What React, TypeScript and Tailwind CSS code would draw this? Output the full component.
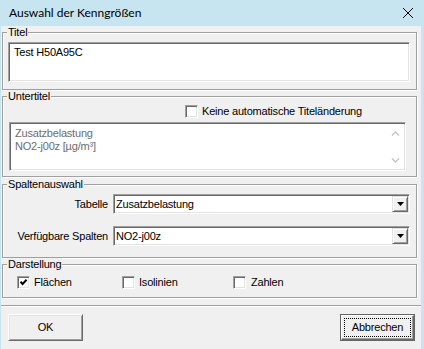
import type { ReactNode } from "react";

const sunken =
  "border border-t-[#a0a0a0] border-l-[#a0a0a0] border-r-white border-b-white shadow-[inset_1px_1px_0_#696969,inset_-1px_-1px_0_#e3e3e3]";

function Group({
  label,
  className,
  children,
}: {
  label: string;
  className: string;
  children: ReactNode;
}) {
  return (
    <div
      className={
        "relative ml-[1px] mr-[4px] border border-[#a0a0a0] shadow-[inset_1px_1px_0_#fff,1px_1px_0_#fff] " +
        className
      }
    >
      <span className="absolute left-[4px] top-[-7px] bg-[#f0f0f0] px-[1px] leading-[13px]">
        {label}
      </span>
      {children}
    </div>
  );
}

function Checkbox({ checked = false }: { checked?: boolean }) {
  return (
    <span
      className={
        "flex h-[13px] w-[13px] shrink-0 items-center justify-center bg-white " +
        sunken
      }
    >
      {checked && (
        <svg width="9" height="9" viewBox="0 0 9 9">
          <path
            d="M1.5 3.8L3.6 6 7.6 1.8"
            stroke="#000"
            strokeWidth="2"
            fill="none"
          />
        </svg>
      )}
    </span>
  );
}

function Select({ value }: { value: string }) {
  return (
    <div className={"flex h-[20px] items-center bg-white pl-[2px] " + sunken}>
      <span className="flex-1 leading-[13px]">{value}</span>
      <span className="mr-[1px] flex h-[16px] w-[16px] items-center justify-center border border-t-[#e3e3e3] border-l-[#e3e3e3] border-r-[#696969] border-b-[#696969] bg-[#f0f0f0] shadow-[inset_1px_1px_0_#fff,inset_-1px_-1px_0_#a0a0a0]">
        <svg width="7" height="4" viewBox="0 0 7 4">
          <polygon points="0,0 7,0 3.5,4" fill="#000" />
        </svg>
      </span>
    </div>
  );
}

function Chevron({ down = false }: { down?: boolean }) {
  return (
    <span className="flex h-[17px] items-center justify-center">
      <svg width="9" height="6" viewBox="0 0 9 6">
        <path
          d={down ? "M1 1.5L4.5 5 8 1.5" : "M1 4.5L4.5 1 8 4.5"}
          stroke="#c4c4c4"
          strokeWidth="1.4"
          fill="none"
        />
      </svg>
    </span>
  );
}

function WinButton({
  label,
  isDefault = false,
}: {
  label: string;
  isDefault?: boolean;
}) {
  if (isDefault) {
    return (
      <div className="h-[27px] w-[75px] border border-[#646464]">
        <div className="flex h-full w-full items-center justify-center border border-t-white border-l-white border-r-[#696969] border-b-[#696969] bg-[#f0f0f0] p-[2px] shadow-[inset_-1px_-1px_0_#a0a0a0]">
          <span className="flex h-full w-full items-center justify-center border border-dotted border-black leading-[13px]">
            {label}
          </span>
        </div>
      </div>
    );
  }
  return (
    <div className="flex h-[27px] w-[75px] items-center justify-center border border-t-white border-l-white border-r-[#696969] border-b-[#696969] bg-[#f0f0f0] leading-[13px] shadow-[inset_1px_1px_0_#e3e3e3,inset_-1px_-1px_0_#a0a0a0]">
      {label}
    </div>
  );
}

export default function App() {
  return (
    <div className="flex h-[349px] w-[424px] flex-col overflow-hidden bg-[#c6e5f1] font-['Liberation_Sans',Arial,sans-serif] text-[11px] tracking-[-0.2px] text-black">
      <div className="flex h-[26px] shrink-0 items-center justify-between pl-[9px]">
        <span className="font-['Lato','Noto_Sans',sans-serif] text-[12px] tracking-normal">
          Auswahl der Kenngrößen
        </span>
        <svg width="10" height="10" viewBox="0 0 10 10" className="mr-[11px]">
          <path d="M0 0L10 10M10 0L0 10" stroke="#000" strokeWidth="1" />
        </svg>
      </div>

      <div className="ml-[1px] mr-[3px] flex flex-1 flex-col bg-[#f0f0f0]">
        <Group label="Titel" className="mt-[6px] pt-[9px] pb-[7px] pl-[5px] pr-[6px]">
          <div className={"h-[40px] bg-white pl-[5px] pt-[3px] leading-[13px] " + sunken}>
            Test H50A95C
          </div>
        </Group>

        <Group label="Untertitel" className="mt-[6px] pt-[8px] pb-[5px] pl-[6px] pr-[10px]">
          <div className="ml-[176px] flex h-[13px] items-center gap-[4px]">
            <Checkbox />
            <span className="leading-[13px]">Keine automatische Titeländerung</span>
          </div>
          <div className={"mt-[4px] flex h-[49px] bg-white " + sunken}>
            <div className="flex-1 pl-[5px] pt-[4px] leading-[13px] text-[#6d6d6d]">
              <div>Zusatzbelastung</div>
              <div>NO2-j00z [µg/m³]</div>
            </div>
            <div className="my-[2px] mr-[2px] flex w-[15px] flex-col justify-between">
              <Chevron />
              <Chevron down />
            </div>
          </div>
        </Group>

        <Group label="Spaltenauswahl" className="mt-[7px] pt-[9px] pb-[11px] pr-[6px]">
          <div className="grid grid-cols-[105px_1fr] items-center gap-x-[5px] gap-y-[12px]">
            <span className="text-right leading-[13px]">Tabelle</span>
            <Select value="Zusatzbelastung" />
            <span className="text-right leading-[13px]">Verfügbare Spalten</span>
            <Select value="NO2-j00z" />
          </div>
        </Group>

        <Group label="Darstellung" className="mt-[6px] pt-[11px] pb-[8px] pl-[14px]">
          <div className="flex h-[13px] items-center">
            <div className="flex w-[105px] items-center gap-[4px]">
              <Checkbox checked />
              <span className="leading-[13px]">Flächen</span>
            </div>
            <div className="flex w-[111px] items-center gap-[4px]">
              <Checkbox />
              <span className="leading-[13px]">Isolinien</span>
            </div>
            <div className="flex items-center gap-[5px]">
              <Checkbox />
              <span className="leading-[13px]">Zahlen</span>
            </div>
          </div>
        </Group>

        <div className="mt-[7px] h-[2px] border-t border-b border-t-[#a0a0a0] border-b-white" />

        <div className="mt-[7px] flex justify-between pl-[7px] pr-[6px]">
          <WinButton label="OK" />
          <WinButton label="Abbrechen" isDefault />
        </div>
      </div>
    </div>
  );
}
